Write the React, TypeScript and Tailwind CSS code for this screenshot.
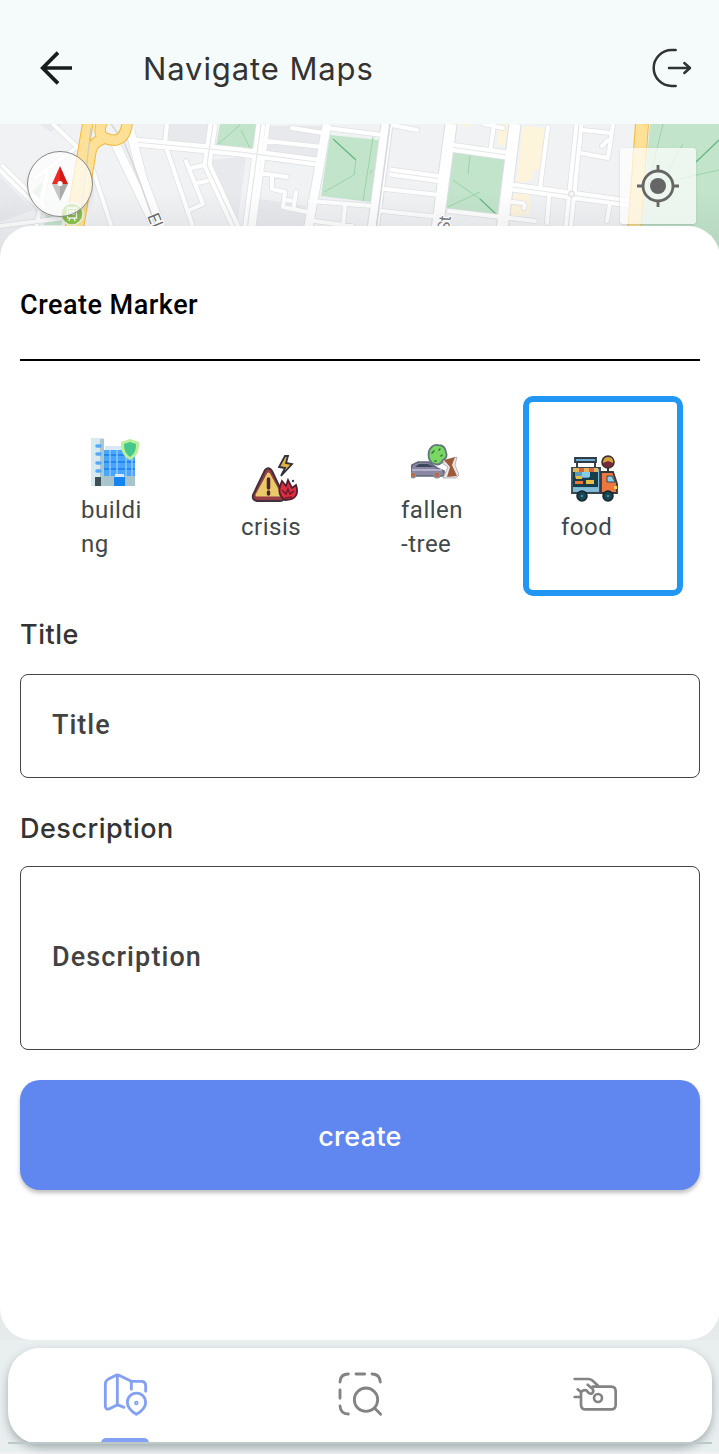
import React from "react";
import clsx from "clsx";

function BuildingIcon() {
  return (
    <svg viewBox="0 0 48 48" className="h-12 w-12">
      <path d="M0 0h13v48H0z" fill="#d9e9f0" />
      <path d="M9 1h4v47H9z" fill="#a9c9cd" />
      <path d="M14 8h19v5H14z" fill="#d5e8f3" />
      <path d="M13 12h31v26H13z" fill="#4aa5fb" />
      <path d="M13 17h31M13 24h31M13 31h31" stroke="#2387f5" strokeWidth="2" />
      <path d="M19 12v26M26 12v26M35 12v26M41 12v26" stroke="#8ccafe" strokeWidth="1.5" />
      <path d="M13 38h31v10H13z" fill="#a8c5ce" />
      <path d="M23 39h11v9H23z" fill="#1684ee" />
      <path d="M24 36h9v3h-9z" fill="#d8e9f6" />
      <path d="M4 39h6v9H4z" fill="#3d5055" />
      <path d="M6 8h3M6 16h3M6 25h3M6 33h3" stroke="#54a9ff" strokeWidth="3.5" strokeLinecap="round" />
      <path d="M39 1l9 3c0 8-1 14-9 18-8-4-9-10-9-18z" fill="#b9ee9b" />
      <path d="M39 4l6 2c0 6-1 9-6 13-5-4-6-8-6-13z" fill="#45c88b" />
    </svg>
  );
}

function CrisisIcon() {
  return (
    <svg viewBox="0 0 48 48" className="h-12 w-12">
      <path d="M14 15q4-4 7 1l12 25q1 5-4 5H6q-5-1-4-6z" fill="#963d45" stroke="#403039" strokeWidth="2" />
      <path d="M17.5 19L29 40H6z" fill="#ebca69" stroke="#ebca69" strokeWidth="3" strokeLinejoin="round" />
      <path d="M17.5 24v9M17.5 37v2" stroke="#4b252c" strokeWidth="3.5" strokeLinecap="round" />
      <path d="M34 1l-6 11 6 1-4 8 11-12-6-1 2-7z" fill="#e4b343" stroke="#303240" strokeWidth="1.8" />
      <path d="M34 45c-9-6-5-14-3-19l4 5 2-6 4 8 4-3c3 9 0 15-11 15z" fill="#e12c42" stroke="#4c202c" strokeWidth="1.8" />
      <path d="M31 35l4 4 2-5 2 5 4-3M34 43l7-1" stroke="#6d1d2d" strokeWidth="1.6" fill="none" />
      <circle cx="42" cy="26" r="1.2" fill="#39404c" />
    </svg>
  );
}

function FallenTreeIcon() {
  return (
    <svg viewBox="0 -7 48 48" className="h-12 w-12">
      <path d="M0 29V24l1-4 6-3h11l8 6 7 3v5H0z" fill="#8a85a4" stroke="#606777" strokeWidth="1.6" />
      <path d="M4 22l4-3h9l6 3z" fill="#39485c" />
      <path d="M1 25h30" stroke="#b4b0c7" strokeWidth="2" />
      <circle cx="2" cy="30" r="2.8" fill="#b76b4c" stroke="#8b909c" strokeWidth="1.2" />
      <circle cx="26" cy="30" r="3" fill="#b76b4c" stroke="#8b909c" strokeWidth="1.2" />
      <path d="M31 18l15-6-2 8 4 10-3 3H32l5-11z" fill="#eee6e2" stroke="#b4b5b8" strokeWidth="1" />
      <path d="M33 15l11-3-3 8 5 11-10 1 3-10z" fill="#9d5b3c" />
      <path d="M18 6q3-7 9-6 7 0 8 7 2 6-3 8-3 6-8 4-8-2-6-13z" fill="#7ad763" stroke="#62777f" strokeWidth="1.8" />
      <path d="M21 8l2-2M28 5l1-1M24 16h1M30 11l1-1" stroke="#31753a" strokeWidth="1.6" strokeLinecap="round" />
    </svg>
  );
}

function FoodIcon() {
  return (
    <svg viewBox="0 0 48 48" className="h-12 w-12">
      <path d="M1 13h28v25H1z" fill="#79b6d5" stroke="#39464e" strokeWidth="1.8" />
      <path d="M4 3h21v4H4z" fill="#6eacd0" stroke="#303b48" strokeWidth="1.8" />
      <path d="M6 7v5M24 7v5" stroke="#36404a" strokeWidth="2" />
      <path d="M2 17h25v15H2z" fill="#163d49" />
      <path d="M4 17h14v6H4z" fill="#5a9dbb" />
      <path d="M11 16h8v6h-8z" fill="#85cceb" />
      <path d="M2 13h25v4H2z" fill="#e5b455" />
      <path d="M8 13h5v4H8zM18 13h5v4h-5z" fill="#d9604e" />
      <path d="M4 26h8v3H4z" fill="#ee7438" />
      <path d="M5 21h6v3H5zM15 25h8v4h-8z" fill="#e8bd48" />
      <path d="M2 33h26v3H2z" fill="#85bdd8" />
      <path d="M30 17h12l4 12v9H30z" fill="#ed773f" stroke="#37383d" strokeWidth="1.8" />
      <path d="M36 21h5l3 6h-8z" fill="#8dceeb" stroke="#354b56" strokeWidth="1" />
      <path d="M37 12v5" stroke="#333" strokeWidth="2" />
      <circle cx="37" cy="7" r="6" fill="#7b273a" stroke="#3b3334" strokeWidth="1.6" />
      <path d="M32 8q0-6 5-6 6 0 5 6l-5-2z" fill="#d1a33d" />
      <path d="M43 31h3v3h-3z" fill="#ffd34e" />
      <circle cx="11" cy="41" r="5" fill="#154653" stroke="#17242a" strokeWidth="1.5" />
      <circle cx="37" cy="41" r="5" fill="#154653" stroke="#17242a" strokeWidth="1.5" />
      <circle cx="11" cy="41" r="1.3" fill="#4d8490" />
      <circle cx="37" cy="41" r="1.3" fill="#4d8490" />
    </svg>
  );
}

const doubleRoads =
  "M0 167L44 210M135 142L240 152L324 163M390 172L442 179M450 147L507 155M213 124L207 165L237 230M261 124L247 230M579 124L568 230M512 187L629 203";

const minorRoads =
  "M53 124L77 147L35 178M48 170L36 228M0 226L70 217M167 124L165 143M167 150L194 230M93 170L112 228M186 161L203 204L190 210M192 168L208 164M197 183L207 181M268 124L253 230M258 140L322 147M292 128L323 133M327 128L383 135M253 172L287 177M272 177V189L285 192L283 207L312 213M296 192L294 206M285 200L295 201M310 201L372 206M345 205L343 226M314 221L352 226M385 189L440 195M382 211L440 217M392 125L417 130M449 211L535 221M484 124L503 128M494 124L490 153M548 127L540 188M512 202L522 203Q526 204 524 208M549 197L547 223M580 153L608 158L613 124M583 130L611 133M602 146L608 140M610 203L607 221";

const avenues =
  "M642 124L632 260M88 122L70 230M102 122Q97 135 105 138Q115 143 122 137Q127 131 127 122M103 139Q93 142 91 151L78 230";

function MapView() {
  return (
    <svg viewBox="0 124 720 136" className="block h-[136px] w-full">
      <defs>
        <linearGradient id="shade" x1="0" y1="0" x2="0" y2="1">
          <stop offset="0.5" stopColor="#6b7075" stopOpacity="0" />
          <stop offset="0.75" stopColor="#6b7075" stopOpacity="0.08" />
          <stop offset="1" stopColor="#6b7075" stopOpacity="0.14" />
        </linearGradient>
      </defs>
      <path d="M0 124h720v136H0z" fill="#f0f2f4" />
      <path d="M40 124h22l-12 8zM168 124h44l-4 24-43-4zM211 160l29-3 6 0-9 70-12-25zM268 126h55l-6 34-56-8zM254 198l52 8v20h-58zM0 176l33 34-33 12z" fill="#e7e9ed" />

      {/* parks */}
      <path d="M220 124H257L254 151L216 146zM263 124h5l-6 26zM330 135L379 140L371 202L321 196zM453 151L505 158L497 217L446 208zM650 124H720V260H638zM42 182L44 198L30 194zM46 215l16 4v6H44z" fill="#c2e4cb" />
      <path d="M333 139L356 160L354 175L324 192M373 137L363 201M372 170l-2 4M453 180L480 199M470 155L468 174M448 207L480 192M240 125L217 145M241 130l11 22M663 124L648 186L719 170M683 144L674 160L666 178" fill="none" stroke="#9bd3ab" strokeWidth="1" />
      <path d="M333 139L356 160M480 199L497 215M696 162L719 140" fill="none" stroke="#66b981" strokeWidth="1.3" />
      <path d="M498 124h10l-3 22-8-1zM523 126l22 2-5 42h-7l-1 10-16 4zM511 194h18l1 20-20 3zM458 124h12l-4 3z" fill="#fdf4dc" />

      {/* streets */}
      <g fill="none" strokeLinejoin="round">
        <path d={minorRoads} stroke="#e0e2e5" strokeWidth="5.6" strokeLinecap="round" />
        <path d={doubleRoads} stroke="#dfe1e4" strokeWidth="10.5" />
        <path d="M115 143L157 230M130 130L143 180L162 230" stroke="#dfe1e5" strokeWidth="10" />
        <path d="M327 124L308 230" stroke="#dcdfe3" strokeWidth="10" />
        <path d="M387 124L373 230M451 124L437 230M515 124L502 230" stroke="#dcdfe3" strokeWidth="13" />
        <path d={minorRoads} stroke="#fff" strokeWidth="4" strokeLinecap="round" />
        <path d={doubleRoads} stroke="#fff" strokeWidth="9" />
        <path d={doubleRoads} stroke="#e4e6e9" strokeWidth="1.2" />
        <path d="M115 143L157 230M130 130L143 180L162 230" stroke="#fff" strokeWidth="8.5" />
        <path d="M327 124L308 230" stroke="#fff" strokeWidth="8.5" />
        <path d="M387 124L373 230M451 124L437 230M515 124L502 230" stroke="#fff" strokeWidth="11" />
        <path d="M390 124L376 230M111 124L124 142L138 177L157 230" stroke="#d5d8dc" strokeWidth="1.6" />
        <path d={avenues} stroke="#f6b83c" strokeWidth="11.5" />
        <path d={avenues} stroke="#fee096" strokeWidth="9.5" />
        <path d="M642 124L632 260" stroke="#f6b83c" strokeWidth="14" />
        <path d="M642 124L632 260" stroke="#fee096" strokeWidth="12" />
        <path d="M91 128L80 220" stroke="#cfcabb" strokeWidth="1.2" />
      </g>
      <circle cx="571.5" cy="194" r="3" fill="#f5f5f6" stroke="#d9dbde" />

      <circle cx="72" cy="214" r="11" fill="#8bc34a" stroke="#eef6e4" strokeWidth="1.5" />
      <path d="M67.500 208h9v10h-9zM70 211h4v3h-4zM69 221l1-3M75 221l-1-3" fill="none" stroke="#fff" strokeWidth="1.3" />
      <path d="M0 124h720v136H0z" fill="url(#shade)" />
      <text x="0" y="0" transform="translate(147 216) rotate(68)" fontFamily="Roboto, sans-serif" fontSize="17" fill="#6b6e72" stroke="#fff" strokeWidth="2" paintOrder="stroke">
        El
      </text>
      <text x="0" y="0" transform="translate(449 232) rotate(-83)" fontFamily="Roboto, sans-serif" fontSize="17" fill="#777a7e" stroke="#fff" strokeWidth="2" paintOrder="stroke">
        St
      </text>
    </svg>
  );
}

const markers = [
  { name: "buildi\nng", Icon: BuildingIcon },
  { name: "crisis", Icon: CrisisIcon },
  { name: "fallen\n-tree", Icon: FallenTreeIcon },
  { name: "food", Icon: FoodIcon, selected: true },
];

export default function App() {
  return (
    <div className="h-[1454px] w-full overflow-hidden">
      <div className="flex h-full w-[720px] flex-col bg-[#f5fbfb] font-[Roboto,sans-serif]">
        <header className="flex h-[124px] shrink-0 items-center pt-3 pr-[23px] pl-9">
          <svg viewBox="108 144 120 120" className="h-10 w-10" fill="none" stroke="#171d1e" strokeWidth="11">
            <path d="M174 158L128 204L174 250M126 204H216" />
          </svg>
          <h1 className="ml-[67px] pt-px font-[Inter,sans-serif] text-[31px] leading-10 tracking-[0.9px] whitespace-nowrap text-[#333]">
            Navigate Maps
          </h1>
          <svg viewBox="150 71 144 144" className="ml-auto h-12 w-12" fill="none" stroke="#303333" strokeWidth="7.500" strokeLinecap="round" strokeLinejoin="round">
            <path d="M230 89H218A54 54 0 0 0 218 197H230M210 143H272M256 128L273 143L256 158" />
          </svg>
        </header>

        <div className="relative h-[136px] shrink-0">
          <MapView />
          <div className="absolute top-[27px] left-[27px] flex h-[66px] w-[66px] items-center justify-center rounded-full border border-[#888] bg-white/70 shadow-md">
            <svg viewBox="0 0 18 36" className="h-9 w-[18px]">
              <path d="M9 0L1 18H9z" fill="#ef2929" />
              <path d="M9 0L17 18H9z" fill="#d11a14" />
              <path d="M1 18H9V35z" fill="#c5c5c5" />
              <path d="M17 18H9V35z" fill="#aaa" />
              <circle cx="9" cy="17.500" r="2.600" fill="#fff" />
            </svg>
          </div>
          <div className="absolute top-6 left-[620px] flex h-[76px] w-[76px] items-center justify-center rounded-[3px] bg-white/70 shadow">
            <svg viewBox="0 0 42 42" className="h-[42px] w-[42px]" fill="none" stroke="#666" strokeWidth="2.800">
              <circle cx="21" cy="21" r="15" />
              <circle cx="21" cy="21" r="8" fill="#666" stroke="none" />
              <path d="M21 0V6M21 36V42M0 21H6M36 21H42" />
            </svg>
          </div>
        </div>

        <div className="bg-linear-to-b from-transparent to-[#e6eaeb]">
          <main className="relative -mt-[34px] flex h-[1114px] flex-col rounded-[32px] bg-white px-5 pt-[59px]">
            <h2 className="h-10 text-[27px] leading-10 font-medium tracking-[0.5px] text-black">Create Marker</h2>
            <hr className="mt-[34px] border-t-2 border-black" />

            <div className="mt-[35px] ml-[23px] flex">
              {markers.map(({ name, Icon, selected }) => (
                <button
                  key={name}
                  className={clsx(
                    "flex h-[200px] w-[160px] flex-col justify-center rounded-[10px] border-[6px] pt-[7px] pl-8 text-left",
                    selected ? "border-[#2196f3]" : "border-transparent"
                  )}
                >
                  <span className="ml-[10px]">
                    <Icon />
                  </span>
                  <span className="mt-[7px] text-2xl leading-[34px] tracking-[0.5px] whitespace-pre-line text-[#3f484a]">{name}</span>
                </button>
              ))}
            </div>

            <label className="mt-[19px] h-10 font-[Inter,sans-serif] text-[27px] leading-10 font-medium tracking-[0.5px] text-[#333]">Title</label>
            <div className="mt-[19px] flex h-[104px] items-center rounded-lg border border-[#444] pb-0.5 pl-[31px] text-[27px] font-medium tracking-[1px] text-[#424242]">
              Title
            </div>

            <label className="mt-[31px] h-10 font-[Inter,sans-serif] text-[27px] leading-10 font-medium tracking-[0.5px] text-[#333]">Description</label>
            <div className="mt-[17px] flex h-[184px] items-center rounded-lg border border-[#444] pb-0.5 pl-[31px] text-[27px] font-medium tracking-[1.1px] text-[#424242]">
              Description
            </div>

            <button className="mt-[30px] h-[110px] rounded-[20px] bg-[#6087f0] pt-1 font-[Inter,sans-serif] text-[27px] font-medium tracking-[0.3px] text-white shadow-[0_3px_4px_rgba(0,0,0,0.25)]">
              create
            </button>
          </main>
        </div>

        <footer className="flex flex-1 flex-col border-b-2 border-[#f0f1f2] bg-[#e9eeef] px-2 pt-2">
          <nav className="grid h-24 grid-cols-3 rounded-[32px] bg-white shadow-[0_4px_8px_rgba(60,80,80,0.4)]">
            <div className="flex flex-col items-center justify-between pt-[22px]">
              <svg viewBox="303 150 144 144" className="h-12 w-12" fill="none" stroke="#84a0f3" strokeWidth="8.500" strokeLinecap="round" strokeLinejoin="round">
                <path d="M372 262L352 254L329 266Q316 271 316 258V192Q316 183 324 178L345 167Q352 163 360 167L394 184V208M352 166V254M394 184H424Q437 184 437 197V214" />
                <path d="M409 283C397 276 382 263 382 247A27 27 0 0 1 437 247C437 263 422 276 409 283z" />
                <circle cx="409" cy="249" r="2.500" />
              </svg>
              <div className="h-[6px] w-12 rounded-t-[5px] bg-[#84a0f3]" />
            </div>
            <div className="flex justify-center pt-[22px]">
              <svg viewBox="288 150 144 144" className="h-12 w-12" fill="none" stroke="#838383" strokeWidth="8.500" strokeLinecap="round">
                <path d="M300 186Q301 162 325 162M348 162H374M396 162Q419 162 421 186M300 210V235M300 258Q302 282 325 282M404 265L422 283" />
                <circle cx="378" cy="239" r="35" />
              </svg>
            </div>
            <div className="flex justify-center pt-[22px]">
              <svg viewBox="273 150 144 144" className="h-12 w-12" fill="none" stroke="#838383" strokeWidth="8" strokeLinecap="round" strokeLinejoin="round">
                <path d="M284 177H325Q332 177 338 182L355 198M338 200H393Q407 200 407 214V254Q407 268 393 268H317Q303 268 303 254V214M284 231H301" />
                <path d="M323 194L338 207Q343 216 335 221Q327 223 319 211Q311 209 303 216L293 208" />
                <circle cx="354" cy="234" r="12" />
              </svg>
            </div>
          </nav>
          <div className="relative -mt-[2px] h-[2px] shrink-0 bg-[#bdc8ca]" />
        </footer>
      </div>
    </div>
  );
}
